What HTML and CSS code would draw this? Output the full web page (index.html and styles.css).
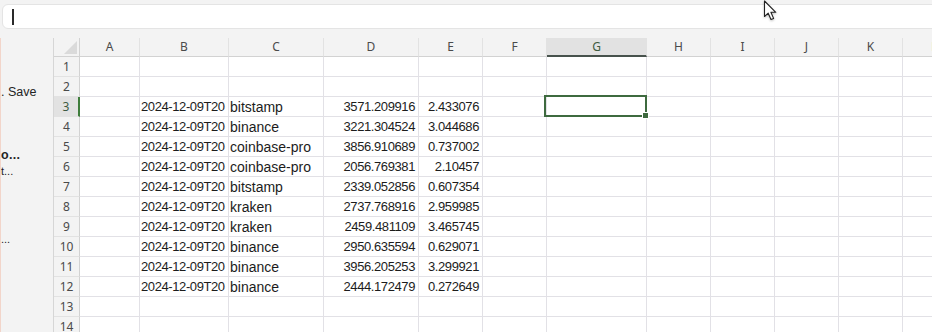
FILE: index.html
```html
<!DOCTYPE html>
<html lang="en">
<head>
    <meta charset="UTF-8">
    <meta name="viewport" content="width=device-width, initial-scale=1.0">
    <title>Book1 - Excel</title>
    <link rel="stylesheet" href="styles.css">
</head>
<body>
    <div class="formula-bar">
        <span class="caret"></span>
    </div>

    <div class="workspace">
        <aside class="side-panel">
            <div class="side-item side-save">. Save</div>
            <div class="side-item side-undo">o...</div>
            <div class="side-item side-edit">t...</div>
            <div class="side-item side-more">...</div>
        </aside>

        <div class="sheet" id="sheet"></div>
    </div>

    <svg class="pointer" width="16" height="22" viewBox="0 0 16 22">
        <path d="M1.5 1 L1.5 16.5 L5.2 13.2 L8 19.5 L10.6 18.4 L7.9 12.3 L12.8 12.3 Z"
              fill="#fff" stroke="#222" stroke-width="1.1" stroke-linejoin="round"/>
    </svg>

    <script>
        const columns = ['A', 'B', 'C', 'D', 'E', 'F', 'G', 'H', 'I', 'J', 'K', 'L'];
        const rowCount = 14;
        const activeCol = 'G';
        const activeRow = 3;

        // rows 3..12: timestamp, exchange, price, amount
        const data = {
            3: ['2024-12-09T20', 'bitstamp', '3571.209916', '2.433076'],
            4: ['2024-12-09T20', 'binance', '3221.304524', '3.044686'],
            5: ['2024-12-09T20', 'coinbase-pro', '3856.910689', '0.737002'],
            6: ['2024-12-09T20', 'coinbase-pro', '2056.769381', '2.10457'],
            7: ['2024-12-09T20', 'bitstamp', '2339.052856', '0.607354'],
            8: ['2024-12-09T20', 'kraken', '2737.768916', '2.959985'],
            9: ['2024-12-09T20', 'kraken', '2459.481109', '3.465745'],
            10: ['2024-12-09T20', 'binance', '2950.635594', '0.629071'],
            11: ['2024-12-09T20', 'binance', '3956.205253', '3.299921'],
            12: ['2024-12-09T20', 'binance', '2444.172479', '0.272649']
        };

        const sheet = document.getElementById('sheet');

        function addCell(className, text) {
            const el = document.createElement('div');
            el.className = className;
            if (text) el.textContent = text;
            sheet.appendChild(el);
            return el;
        }

        addCell('corner').innerHTML = '<span class="corner-mark"></span>';
        columns.forEach(c => {
            addCell('col-head' + (c === activeCol ? ' active' : ''), c);
        });

        for (let r = 1; r <= rowCount; r++) {
            addCell('row-head' + (r === activeRow ? ' active' : ''), String(r));
            const values = data[r] || [];
            columns.forEach(c => {
                let cls = 'cell';
                let text = '';
                if (c === 'B') { cls += ' stamp'; text = values[0]; }
                if (c === 'C') { cls += ' label'; text = values[1]; }
                if (c === 'D' || c === 'E') {
                    cls += ' number';
                    text = values[c === 'D' ? 2 : 3];
                }
                if (c === activeCol && r === activeRow) cls += ' selected';
                addCell(cls, text);
            });
        }
    </script>
</body>
</html>
```

FILE: styles.css
```css
* {
    margin: 0;
    padding: 0;
    box-sizing: border-box;
}

body {
    width: 932px;
    height: 332px;
    overflow: hidden;
    position: relative;
    background: #f3f3f3;
    font-family: 'Liberation Sans', Arial, sans-serif;
    color: #1f1f1f;
}

.formula-bar {
    margin: 4px -12px 0 2px;
    height: 25px;
    background: #fff;
    border: 1px solid #e4e4e4;
    border-radius: 6px;
    display: flex;
    align-items: center;
    padding-left: 9px;
}

.caret {
    width: 2px;
    height: 16px;
    background: #2a2a2a;
}

.workspace {
    display: flex;
    margin-top: 9px;
    height: 294px;
    overflow: hidden;
}

.side-panel {
    width: 53px;
    flex: none;
    border-left: 1px solid #f2d5ca;
    font-size: 12.5px;
    color: #242424;
    white-space: nowrap;
    overflow: hidden;
    display: flex;
    flex-direction: column;
}

.side-item {
    line-height: 16px;
}

.side-save {
    margin-top: 46px;
}

.side-undo {
    margin-top: 47px;
    font-weight: bold;
    letter-spacing: 0.3px;
}

.side-edit {
    margin-top: 0;
    font-size: 11px;
}

.side-more {
    margin-top: 52px;
    font-size: 11px;
}

.sheet {
    flex: none;
    display: grid;
    grid-template-columns: 26px 60px 89px 95px 95px 64px 64px 100px 64px 64px 64px 64px 64px;
    grid-template-rows: 19px repeat(14, 20px);
    border-left: 1px solid #d6d6d6;
    background: #fff;
}

.corner,
.col-head,
.row-head {
    background: #f3f3f3;
    color: #4a4a4a;
    font-family: 'Noto Sans', 'Liberation Sans', sans-serif;
    font-size: 12px;
    text-align: center;
}

.corner {
    border-right: 1px solid #d2d2d2;
    border-bottom: 1px solid #d2d2d2;
    display: flex;
    align-items: flex-end;
    justify-content: flex-end;
    padding: 0 2px 2px 0;
}

.corner-mark {
    width: 0;
    height: 0;
    border-left: 13px solid transparent;
    border-bottom: 13px solid #dadada;
}

.col-head {
    line-height: 18px;
    border-right: 1px solid #e2e2e2;
    border-bottom: 1px solid #d2d2d2;
}

.col-head.active {
    background: #e2e2e2;
    color: #3d5a40;
    border-bottom: 2px solid #47524c;
    line-height: 17px;
}

.row-head {
    line-height: 19px;
    border-right: 1px solid #d2d2d2;
    border-bottom: 1px solid #e2e2e2;
}

.row-head.active {
    background: #e2e2e2;
    color: #3d5a40;
    border-right: 2px solid #3f7d3c;
}

.cell {
    border-right: 1px solid #e2e1e6;
    border-bottom: 1px solid #e2e1e6;
    white-space: nowrap;
    overflow: hidden;
    line-height: 20px;
    font-size: 14px;
    color: #1c1c1c;
}

.stamp {
    font-size: 13px;
    letter-spacing: -0.4px;
    padding-left: 1px;
}

.label {
    padding-left: 1px;
}

.number {
    font-size: 13px;
    letter-spacing: -0.4px;
    text-align: right;
    padding-right: 3px;
}

.cell.selected {
    position: relative;
    overflow: visible;
}

.cell.selected::after {
    content: '';
    position: absolute;
    left: -3px;
    top: -2px;
    right: -1px;
    bottom: -1px;
    border: 2px solid #3e6a3f;
}

.cell.selected::before {
    content: '';
    position: absolute;
    right: -3px;
    bottom: -3px;
    width: 5px;
    height: 5px;
    background: #3e6a3f;
    border: 1px solid #fff;
    z-index: 1;
}

.pointer {
    position: absolute;
    left: 763px;
    top: 0;
    filter: drop-shadow(0 1px 1px rgba(0, 0, 0, 0.25));
}
```
